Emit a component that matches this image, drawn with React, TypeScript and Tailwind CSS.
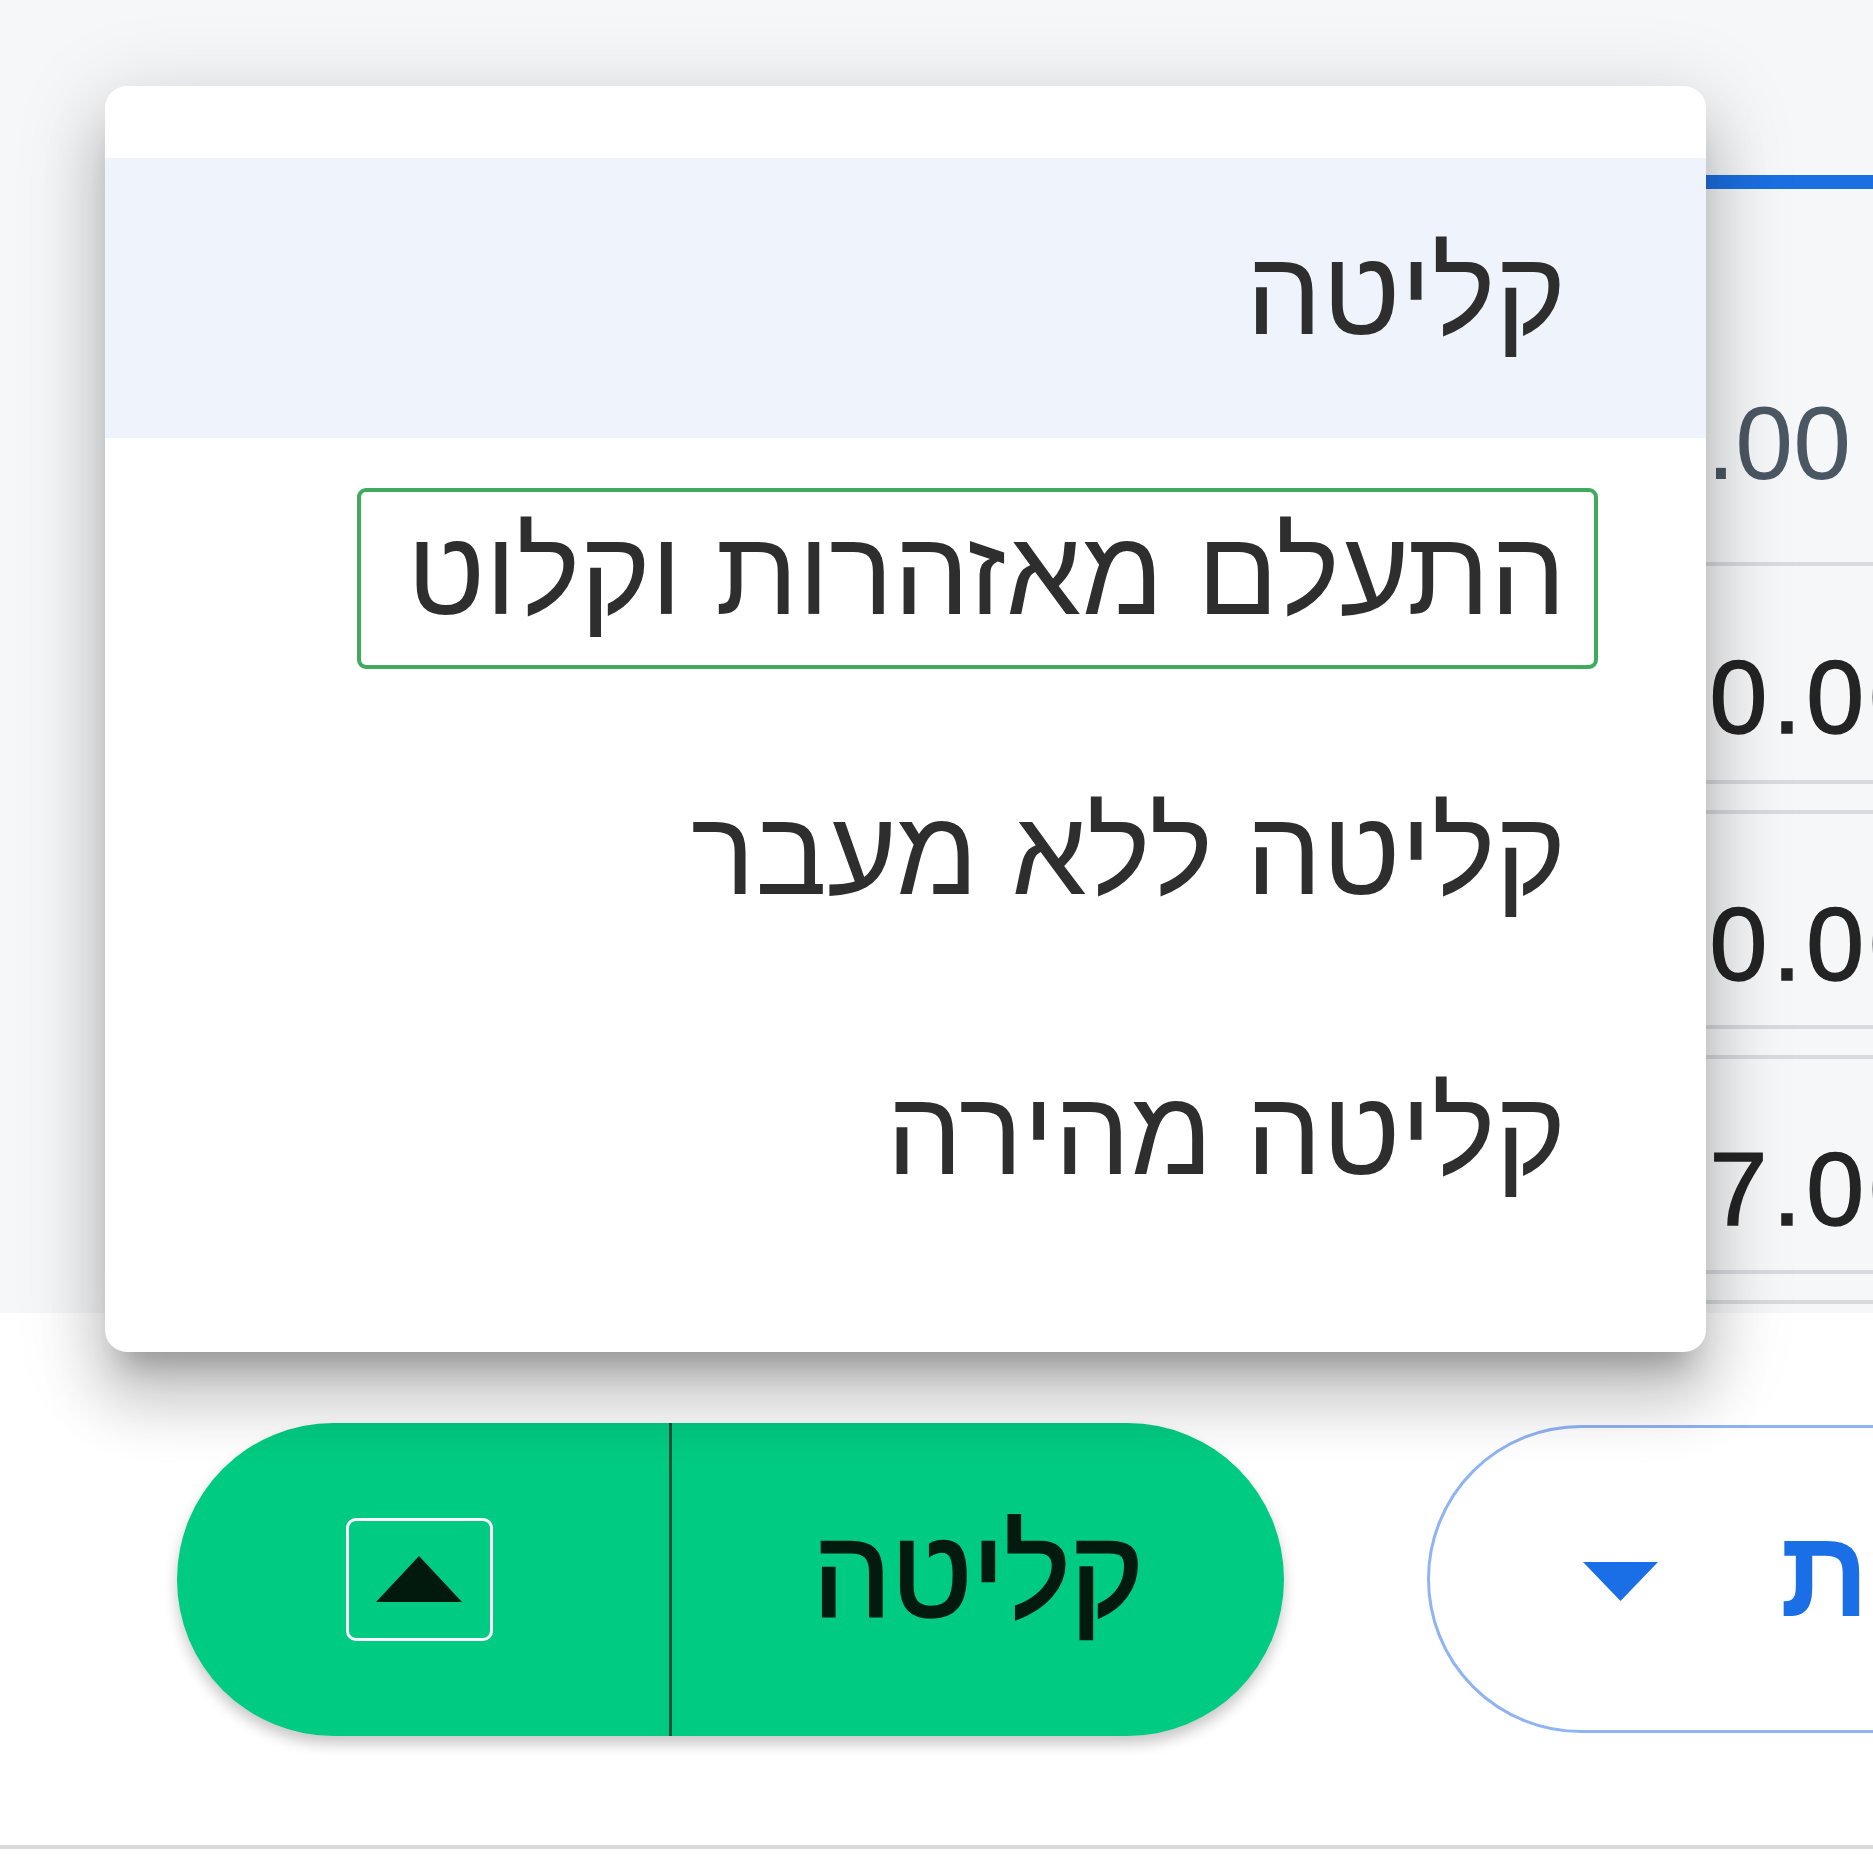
import React from "react";

const items = ["קליטה", "התעלם מאזהרות וקלוט", "קליטה ללא מעבר", "קליטה מהירה"];

export default function App() {
  return (
    <div className="relative w-[1873px] h-[1865px] overflow-hidden bg-white font-['Liberation_Sans',Arial,sans-serif]">
      <div className="flex flex-col">
        {/* table region */}
        <div className="h-[1313px] bg-[#f6f7f9] pt-[175px] overflow-hidden">
          <div className="ml-[700px] w-[1235px] border-t-[14px] border-[#1b6fe2] text-[104px] leading-none">
            <div className="h-[377px] border-b-4 border-[#d7dbe0] flex items-center justify-end pt-[134px] pr-[84px] text-[#4b5763]">
              1,250.00
            </div>
            <div className="h-[218px] border-b-4 border-[#d7dbe0] flex items-center justify-end pt-[48px] pr-[3px] tracking-[5px] text-[#242424] [-webkit-text-stroke:1.5px_#242424]">
              0.00
            </div>
            <div className="h-[26px]" />
            <div className="h-[219px] border-y-4 border-[#d7dbe0] flex items-center justify-end pt-[48px] pr-[3px] tracking-[5px] text-[#242424] [-webkit-text-stroke:1.5px_#242424]">
              0.00
            </div>
            <div className="h-[26px]" />
            <div className="h-[219px] border-y-4 border-[#d7dbe0] flex items-center justify-end pt-[48px] pr-[3px] tracking-[5px] text-[#242424] [-webkit-text-stroke:1.5px_#242424]">
              57.00
            </div>
            <div className="h-[26px]" />
            <div className="h-[40px] border-t-4 border-[#d7dbe0]" />
          </div>
        </div>
        {/* footer */}
        <div className="h-[536px] border-b-4 border-[#dadada] bg-white flex items-center pl-[177px] gap-[143px]">
          <div className="flex h-[313px] w-[1107px] shrink-0 rounded-full bg-[#00cb82] shadow-[0_8px_14px_rgba(0,0,0,0.22)]">
            <div className="flex w-[492px] items-center justify-center pr-[8px]">
              <div className="flex h-[123px] w-[147px] items-center justify-center rounded-[10px] border-[3px] border-white">
                <svg width="86" height="46" viewBox="0 0 86 46">
                  <polygon points="43,0 86,46 0,46" fill="#021a0e" />
                </svg>
              </div>
            </div>
            <div className="w-[3px] bg-[#12553a]" />
            <div dir="rtl" className="flex flex-1 items-center justify-center pb-[12px] text-[124px] leading-none text-[#031a0e] [-webkit-text-stroke:2.5px_#031a0e]">
              קליטה
            </div>
          </div>
          <div className="flex h-[308px] w-[900px] shrink-0 items-center rounded-full border-[3px] border-[#90b3f4] pl-[153px]">
            <svg width="75" height="39" viewBox="0 0 75 39" className="mt-[4px]">
              <polygon points="0,0 75,0 37.5,39" fill="#1a6ee6" />
            </svg>
            <div dir="rtl" className="ml-[122px] pb-[12px] text-[124px] font-bold leading-none text-[#1a6ee6] whitespace-nowrap">
              פעולות
            </div>
          </div>
        </div>
      </div>

      {/* dropdown menu overlay */}
      <div
        dir="rtl"
        className="absolute left-[105px] top-[86px] w-[1601px] h-[1266px] rounded-[22px] bg-white py-[72px] shadow-[0_30px_30px_-18px_rgba(0,0,0,0.24),0_48px_60px_6px_rgba(0,0,0,0.15),0_18px_84px_12px_rgba(0,0,0,0.13)]"
      >
        {items.map((t, i) => (
          <div
            key={t}
            className={`flex h-[280px] items-center pr-[108px] ${i === 0 ? "bg-[#eff4fc]" : ""}`}
          >
            <span
              className={`flex h-[181px] items-center rounded-[9px] border-4 pr-[28px] pl-[46px] pb-[12px] text-[120px] leading-none text-[#2e2e2e] whitespace-nowrap ${
                i === 1 ? "border-[#3fab5f]" : "border-transparent"
              }`}
            >
              {t}
            </span>
          </div>
        ))}
      </div>
    </div>
  );
}
